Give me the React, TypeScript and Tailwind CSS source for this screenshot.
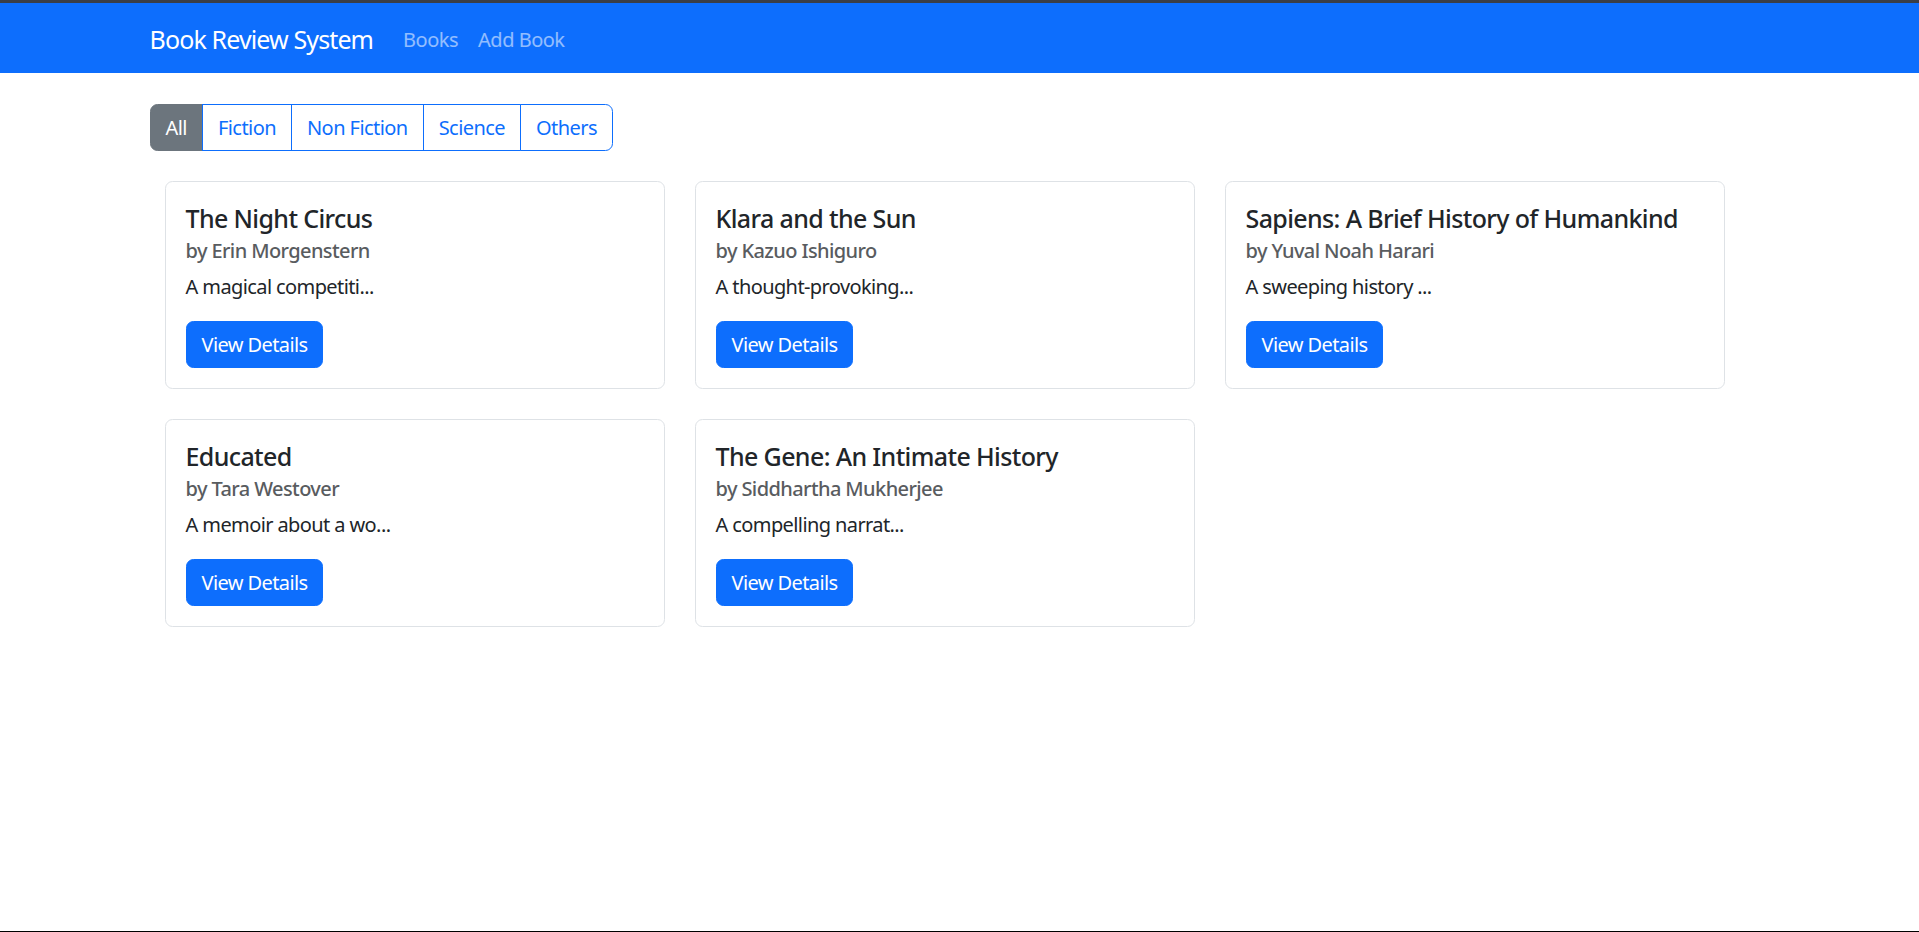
const books = [
  { title: "The Night Circus", author: "Erin Morgenstern", blurb: "A magical competiti..." },
  { title: "Klara and the Sun", author: "Kazuo Ishiguro", blurb: "A thought-provoking..." },
  { title: "Sapiens: A Brief History of Humankind", author: "Yuval Noah Harari", blurb: "A sweeping history ..." },
  { title: "Educated", author: "Tara Westover", blurb: "A memoir about a wo..." },
  { title: "The Gene: An Intimate History", author: "Siddhartha Mukherjee", blurb: "A compelling narrat..." },
];

const filters = ["All", "Fiction", "Non Fiction", "Science", "Others"];

function BookCard({ book }: { book: (typeof books)[number] }) {
  return (
    <div className="w-[500px] border border-[#dee2e6] rounded-[7.5px] p-[20px] bg-white">
      <h5 className="text-[25px] leading-[30px] font-medium tracking-[-0.025em] text-[#212529] mt-[1px] mb-[9px]">
        {book.title}
      </h5>
      <h6 className="text-[20px] leading-[24px] font-medium tracking-[-0.03em] text-[#595c5f] -mt-[3px] mb-[9px]">
        by {book.author}
      </h6>
      <p className="text-[20px] leading-[30px] tracking-[-0.03em] text-[#212529] mb-[19px]">{book.blurb}</p>
      <button className="px-[15px] py-[7.5px] text-[20px] leading-[30px] tracking-[-0.03em] rounded-[7.5px] bg-[#0d6efd] text-white border border-[#0d6efd]">
        View Details
      </button>
    </div>
  );
}

export default function App() {
  return (
    <div className="min-h-screen flex flex-col border-b border-black bg-white font-['Segoe_UI','Noto_Sans',sans-serif] text-[#212529]">
      <div className="h-[3px] bg-[#3a3e46]"></div>
      <nav className="h-[70px] bg-[#0d6efd]">
        <div className="max-w-[1650px] mx-auto px-[15px] pt-[4px] h-full flex items-center">
          <span className="text-[25px] leading-[37.5px] tracking-[-0.035em] text-white mr-[20px]">Book Review System</span>
          <a className="px-[10px] text-[20px] leading-[30px] tracking-[-0.025em] text-white/55">Books</a>
          <a className="px-[10px] text-[20px] leading-[30px] tracking-[-0.025em] text-white/55">Add Book</a>
        </div>
      </nav>

      <section className="max-w-[1650px] w-full mx-auto px-[15px]">
        <div className="inline-flex mt-[31px]">
          {filters.map((f, inx) => (
            <button
              key={f}
              className={
                "px-[15px] py-[7.5px] text-[20px] leading-[30px] tracking-[-0.028em] border " +
                (inx === 0
                  ? "bg-[#6c757d] border-[#6c757d] text-white rounded-l-[7.5px]"
                  : "-ml-px bg-white border-[#0d6efd] text-[#0d6efd]") +
                (inx === filters.length - 1 ? " rounded-r-[7.5px]" : "")
              }
            >
              {f}
            </button>
          ))}
        </div>

        <div className="flex flex-wrap gap-[30px] mt-[30px] ml-[15px]">
          {books.map((book, inx) => (
            <BookCard book={book} key={inx} />
          ))}
        </div>
      </section>
    </div>
  );
}
